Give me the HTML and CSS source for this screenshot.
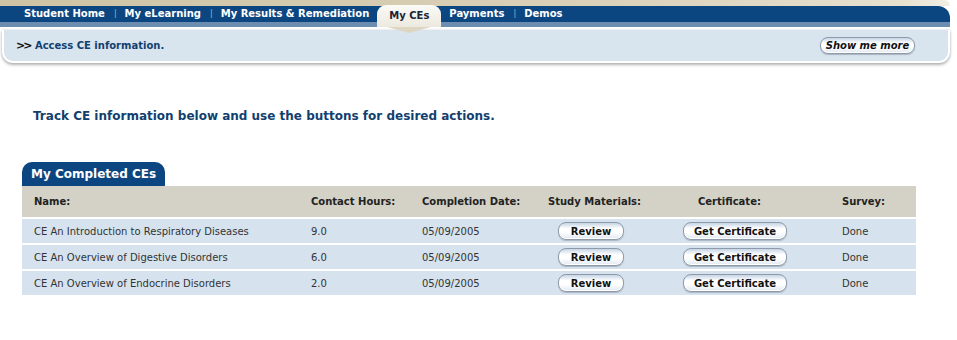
FILE: index.html
```html
<!DOCTYPE html>
<html lang="en">
<head>
  <meta charset="UTF-8">
  <title>My CEs</title>
  <link rel="stylesheet" href="styles.css">
</head>
<body>
  <div class="header">
    <div class="topstrip"></div>
    <div class="nav">
      <a class="nav-link">Student Home</a>
      <span class="sep">|</span>
      <a class="nav-link">My eLearning</a>
      <span class="sep">|</span>
      <a class="nav-link">My Results &amp; Remediation</a>
      <a class="nav-tab">My CEs</a>
      <a class="nav-link">Payments</a>
      <span class="sep">|</span>
      <a class="nav-link">Demos</a>
    </div>
    <div class="info">
      <div class="info-text"><span class="arrows">&gt;&gt;</span> Access CE information.</div>
      <button class="btn btn-more">Show me more</button>
    </div>
  </div>

  <h2 class="intro">Track CE information below and use the buttons for desired actions.</h2>

  <div class="completed">
    <div class="tab-title">My Completed CEs</div>
    <table class="ce-table">
      <colgroup>
        <col class="c-name">
        <col class="c-hours">
        <col class="c-date">
        <col class="c-study">
        <col class="c-cert">
        <col class="c-survey">
      </colgroup>
      <thead>
        <tr>
          <th>Name:</th>
          <th>Contact Hours:</th>
          <th>Completion Date:</th>
          <th>Study Materials:</th>
          <th class="cert-head">Certificate:</th>
          <th>Survey:</th>
        </tr>
      </thead>
      <tbody>
        <tr>
          <td>CE An Introduction to Respiratory Diseases</td>
          <td>9.0</td>
          <td>05/09/2005</td>
          <td class="study-cell"><button class="btn btn-review">Review</button></td>
          <td class="cert-cell"><button class="btn btn-cert">Get Certificate</button></td>
          <td>Done</td>
        </tr>
        <tr>
          <td>CE An Overview of Digestive Disorders</td>
          <td>6.0</td>
          <td>05/09/2005</td>
          <td class="study-cell"><button class="btn btn-review">Review</button></td>
          <td class="cert-cell"><button class="btn btn-cert">Get Certificate</button></td>
          <td>Done</td>
        </tr>
        <tr>
          <td>CE An Overview of Endocrine Disorders</td>
          <td>2.0</td>
          <td>05/09/2005</td>
          <td class="study-cell"><button class="btn btn-review">Review</button></td>
          <td class="cert-cell"><button class="btn btn-cert">Get Certificate</button></td>
          <td>Done</td>
        </tr>
      </tbody>
    </table>
  </div>
</body>
</html>
```

FILE: styles.css
```css
body {
  margin: 0;
  font-family: "DejaVu Sans", Verdana, sans-serif;
  background: #fff;
  color: #222;
}
.header {
  margin-right: 7px;
}
.topstrip {
  height: 6px;
  background: linear-gradient(to right, #cec3a4, #d9d0b8 60%, #e6e0cf 95%, #f2efe6);
  border-top-right-radius: 14px;
}
.nav {
  display: flex;
  align-items: flex-end;
  height: 16px;
  padding-left: 24px;
  background: #0c4680;
  border-bottom: 5px solid #6c8db0;
  border-top-right-radius: 12px;
  position: relative;
  z-index: 2;
}
.nav-link {
  color: #fff;
  font-weight: bold;
  font-size: 10px;
  line-height: 17px;
}
.sep {
  color: #9fb3c8;
  font-size: 8px;
  line-height: 17px;
  margin: 0 8px 0 9px;
}
.nav-tab {
  position: relative;
  margin: 0 8px -5px 8px;
  padding: 0 12px;
  height: 22px;
  line-height: 22px;
  font-size: 10px;
  font-weight: bold;
  color: #1a2436;
  background: linear-gradient(#fbfaf6, #ece9df);
  border-radius: 9px 9px 0 0;
}
.nav-tab::after {
  content: "";
  position: absolute;
  left: 50%;
  bottom: -6px;
  margin-left: -22px;
  border-left: 22px solid transparent;
  border-right: 22px solid transparent;
  border-top: 6px solid #ddd6c2;
}
.info {
  display: flex;
  align-items: center;
  justify-content: space-between;
  height: 31px;
  margin: 3px 0 0 2px;
  padding: 0 33px 0 12px;
  background: #d8e4ee;
  border: 2px solid #fff;
  border-top: 0;
  border-radius: 0 0 11px 11px;
  box-shadow: 0 2px 3px #b5b5b5, 0 0 2px #c8c8c8;
}
.info-text {
  font-size: 10px;
  font-weight: bold;
  color: #123f6e;
}
.arrows {
  color: #111;
  font-size: 11px;
  letter-spacing: -2px;
  margin-right: 1px;
}
.btn {
  font-family: "DejaVu Sans", Verdana, sans-serif;
  font-size: 10px;
  font-weight: bold;
  color: #111;
  background: linear-gradient(#c6d5e6 0, #ffffff 35%, #ffffff 60%, #dfe8f1 100%);
  border: 1px solid #8e9aaa;
  border-radius: 8px;
  box-shadow: inset 0 -1px 0 #fff, 0 1px 1px #a9b4c1;
  padding: 0;
  height: 18px;
  cursor: pointer;
}
.btn-more {
  font-style: italic;
  width: 95px;
  height: 17px;
}
.intro {
  margin: 46px 0 0 33px;
  font-size: 12px;
  font-weight: bold;
  color: #123f6e;
}
.completed {
  margin: 39px 41px 0 22px;
}
.tab-title {
  display: inline-block;
  height: 24px;
  line-height: 24px;
  padding: 0 9px;
  background: #0c4680;
  color: #fff;
  font-size: 12px;
  font-weight: bold;
  border-radius: 10px 10px 0 0;
}
.ce-table {
  width: 100%;
  border-collapse: collapse;
  table-layout: fixed;
  font-size: 10px;
}
.c-name { width: 277px; }
.c-hours { width: 111px; }
.c-date { width: 126px; }
.c-study { width: 140px; }
.c-cert { width: 154px; }
.ce-table th {
  height: 31px;
  padding: 0 0 0 12px;
  background: #d4d2c6;
  text-align: left;
  font-size: 10px;
  color: #222;
}
.ce-table th.cert-head {
  padding-left: 22px;
}
.ce-table td {
  height: 24px;
  padding: 0 0 0 12px;
  background: #d6e3ee;
  border-top: 2px solid #fff;
  color: #333;
}
.ce-table td.study-cell {
  padding-left: 22px;
}
.ce-table td.cert-cell {
  padding-left: 7px;
}
.btn-review {
  width: 66px;
}
.btn-cert {
  width: 104px;
}
```
